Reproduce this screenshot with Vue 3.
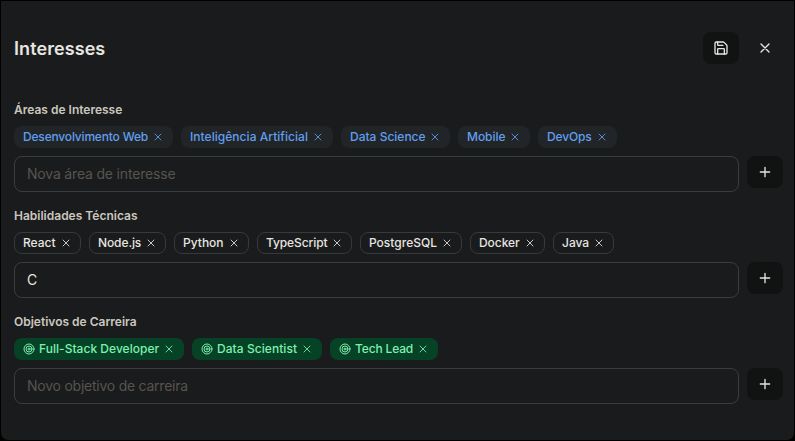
<script setup>
import { ref } from 'vue'

// Each item: label, chip width, letter spacing
const sections = ref([
  {
    title: 'Áreas de Interesse', kind: 'area', draft: '', hint: 'Nova área de interesse',
    items: [['Desenvolvimento Web', 159, -0.18], ['Inteligência Artificial', 152, 0.04], ['Data Science', 109, 0], ['Mobile', 72, -0.05], ['DevOps', 79, -0.15]],
  },
  {
    title: 'Habilidades Técnicas', kind: 'skill', draft: 'C', hint: 'Nova habilidade',
    items: [['React', 67, 0], ['Node.js', 77, -0.1], ['Python', 75, 0], ['TypeScript', 95, -0.1], ['PostgreSQL', 102, 0], ['Docker', 75, -0.05], ['Java', 61, 0]],
  },
  {
    title: 'Objetivos de Carreira', kind: 'goal', draft: '', hint: 'Novo objetivo de carreira',
    items: [['Full-Stack Developer', 170, 0.03], ['Data Scientist', 130, 0.06], ['Tech Lead', 108, -0.15]],
  },
])
</script>

<template>
  <main class="card">
    <header class="head">
      <h1>Interesses</h1>
      <div class="actions">
        <button class="btn" aria-label="Salvar">
          <svg class="icon" viewBox="0 0 24 24"><path d="M15.2 3a2 2 0 0 1 1.4.6l3.8 3.8a2 2 0 0 1 .6 1.4V19a2 2 0 0 1-2 2H5a2 2 0 0 1-2-2V5a2 2 0 0 1 2-2z" /><path d="M17 21v-7a1 1 0 0 0-1-1H8a1 1 0 0 0-1 1v7" /><path d="M7 3v4a1 1 0 0 0 1 1h7" /></svg>
        </button>
        <button class="btn ghost" aria-label="Fechar">
          <svg class="icon" viewBox="0 0 24 24"><path d="M18 6 6 18M6 6l12 12" /></svg>
        </button>
      </div>
    </header>
    <section v-for="s in sections" :key="s.kind" class="group">
      <h2>{{ s.title }}</h2>
      <div class="chips">
        <span v-for="[name, width, tracking] in s.items" :key="name" class="chip" :class="s.kind" :style="{ width: width + 'px', letterSpacing: tracking + 'px' }">
          <svg v-if="s.kind === 'goal'" class="small target" viewBox="0 0 24 24"><circle cx="12" cy="12" r="10" /><circle cx="12" cy="12" r="6" /><circle cx="12" cy="12" r="2" /></svg>
          <span class="name">{{ name }}</span>
          <svg class="small cross" viewBox="0 0 24 24"><path d="M18 6 6 18M6 6l12 12" /></svg>
        </span>
      </div>
      <div class="entry">
        <input v-model="s.draft" :class="s.kind + '-input'" :placeholder="s.hint" />
        <button class="btn" aria-label="Adicionar">
          <svg class="icon" viewBox="0 0 24 24"><path d="M5 12h14M12 5v14" /></svg>
        </button>
      </div>
    </section>
  </main>
</template>

<style>
body { background: #000; }
</style>

<style scoped>
.card {
  box-sizing: border-box;
  width: 795px;
  height: 441px;
  padding: 31px 11px 0 13px;
  border: 1px solid #000;
  border-radius: 0 0 8px 8px;
  background: #1a1b1c;
  color: #e7e5e0;
  font-family: Inter, "Liberation Sans", sans-serif;
}
.head { display: flex; justify-content: space-between; height: 70px; }
h1 { margin: 0; font-size: 18px; line-height: 33px; font-weight: 600; letter-spacing: 0.08px; }
.actions { display: flex; gap: 8px; }
.btn {
  display: flex; align-items: center; justify-content: center;
  flex: none; width: 36px; height: 32px; padding: 0;
  border: 0; border-radius: 8px; background: #111312; color: #e7e5e0;
}
.ghost { background: transparent; }
svg { flex: none; fill: none; stroke: currentColor; stroke-width: 2; stroke-linecap: round; stroke-linejoin: round; }
.icon { width: 16px; height: 16px; }
.small { width: 12px; height: 12px; }
.group { height: 106px; }
h2 { margin: 0; height: 24px; font-size: 12px; line-height: 16px; font-weight: 600; color: #cbc7bf; }
.chips { display: flex; gap: 8px; height: 22px; margin-bottom: 8px; }
.chip {
  display: flex; align-items: center; box-sizing: border-box; height: 22px;
  padding: 0 8px; border: 1px solid transparent; border-radius: 8px;
  font-size: 12px; line-height: 16px; font-weight: 500; white-space: nowrap;
}
.name { flex: 1; min-width: 0; }
.area { background: #212527; color: #629ff0; }
.skill { border-color: #363a3b; color: #e7e5e0; }
.goal { background: #064225; color: #7ff0b0; }
.target { margin-right: 4px; }
.cross { stroke-width: 1.7; }
.entry { display: flex; gap: 8px; }
input {
  box-sizing: border-box; flex: none; width: 725px; height: 36px; padding: 0 12px 2px;
  border: 1px solid #3a3d3e; border-radius: 8px; outline: 0; background: transparent;
  color: #e7e5e0; font: 400 14px Inter, "Liberation Sans", sans-serif;
  letter-spacing: -0.18px;
}
.goal-input { letter-spacing: -0.24px; }
input::placeholder { color: #57544f; opacity: 1; }
</style>
